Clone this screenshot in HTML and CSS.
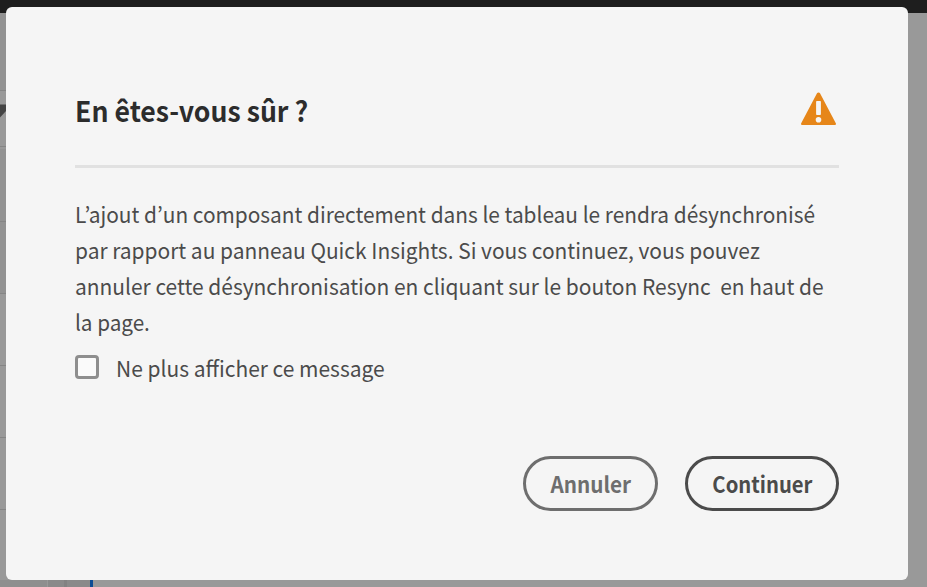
FILE: index.html
```html
<!DOCTYPE html>
<html lang="fr">
<head>
<meta charset="utf-8">
<title>En êtes-vous sûr ?</title>
<link rel="stylesheet" href="styles.css">
</head>
<body>
<div class="backdrop">
  <svg class="page-behind" width="927" height="587" aria-hidden="true">
    <rect width="927" height="587" fill="#999"/>
    <rect width="927" height="13" fill="#1e1e1e"/>
    <rect y="13" width="6" height="77" fill="#929292"/>
    <rect y="149" width="6" height="144" fill="#929292"/>
    <path d="M0 90.5H6M0 146.5H6M0 221.5H6M0 293.5H6M0 365.5H6M0 437.5H6M0 509.5H6" stroke="#858585"/>
    <path d="M0 104.5H6V111L0 117.5Z" fill="#444"/>
    <rect y="580" width="90" height="7" fill="#8f8f8f"/>
    <rect x="48" y="580" width="42" height="7" fill="#8a8a8a"/>
    <rect x="64" y="580" width="3" height="7" fill="#828282"/>
    <rect x="47" y="580" width="1" height="7" fill="#999"/>
    <rect x="90" y="580" width="3" height="7" fill="#0d4c94"/>
  </svg>
  <section class="dialog" role="alertdialog" aria-labelledby="title">
    <header class="header">
      <h1 class="title" id="title">En êtes-vous sûr ?</h1>
      <svg class="alert" width="36" height="34" viewBox="0 0 36 34" aria-hidden="true">
        <path fill="#e68619" d="M17 1.3a1.7 1.7 0 0 1 3 0L35.8 31.3A1.2 1.2 0 0 1 34.8 33H2.2A1.2 1.2 0 0 1 1.2 31.3Z"/>
        <rect x="16.1" y="9" width="4.8" height="14" rx=".8" fill="#f5f5f5"/>
        <circle cx="18.5" cy="27.8" r="2.8" fill="#f5f5f5"/>
      </svg>
    </header>
    <p class="message"><span class="line line-1">L’ajout d’un composant directement dans le tableau le rendra désynchronisé</span>
      <span class="line line-2">par rapport au panneau Quick Insights. Si vous continuez, vous pouvez</span>
      <span class="line line-3">annuler cette désynchronisation en cliquant sur le bouton Resync&nbsp; en haut de</span>
      <span class="line line-4">la page.</span></p>
    <label class="option"><input class="checkbox" type="checkbox"><span class="option-text">Ne plus afficher ce message</span></label>
    <footer class="actions">
      <button class="button button-quiet"><span class="button-label label-quiet">Annuler</span></button>
      <button class="button button-main"><span class="button-label label-main">Continuer</span></button>
    </footer>
  </section>
</div>
</body>
</html>
```
FILE: styles.css
```css
* { box-sizing: border-box; }
body { margin: 0; font-family: "Noto Sans CJK JP", "Noto Sans", sans-serif; color: #4b4b4b; }
.backdrop { position: relative; width: 927px; height: 587px; padding: 7px 19px 7px 6px; overflow: hidden; }
.page-behind { position: absolute; left: 0; top: 0; }
.dialog { position: relative; width: 902px; height: 573px; padding: 69px; border-radius: 6px; background: #f5f5f5; display: flex; flex-direction: column; }
.header { display: flex; justify-content: space-between; height: 92px; flex: none; width: 764px; border-bottom: 3px solid #e1e1e1; }
.title { margin: 14px 0 0; font-size: 28px; line-height: 40px; height: 40px; font-weight: 700; color: #2c2c2c; white-space: nowrap; transform: scaleX(.951); transform-origin: 0 50%; }
.alert { margin: 16px 3px 0 0; }
.message { margin: 27px 0 0; font-size: 22px; line-height: 36px; }
.line { display: block; width: max-content; white-space: nowrap; transform-origin: 0 50%; }
.line-1 { transform: scaleX(.947); }
.line-2 { transform: scaleX(.951); }
.line-3 { transform: scaleX(.952); }
.line-4 { transform: scaleX(.94); }
.option { display: flex; align-items: center; margin-top: 10px; height: 36px; font-size: 22px; line-height: 36px; }
.checkbox { appearance: none; width: 24px; height: 24px; margin: 0 17px 0 0; border: 3px solid #8e8e8e; border-radius: 4px; background: #fafafa; }
.option-text { white-space: nowrap; transform: scaleX(.953); transform-origin: 0 50%; }
.actions { display: flex; justify-content: flex-end; gap: 27px; margin-top: 71px; width: 764px; }
.button { height: 55px; padding: 0 0 1px; border: 3px solid; border-radius: 28px; background: transparent; font: 700 22px/46px "Noto Sans CJK JP", "Noto Sans", sans-serif; white-space: nowrap; }
.button-quiet { width: 135px; color: #6e6e6e; }
.button-main { width: 154px; color: #4b4b4b; }
.button-label { display: inline-block; }
.label-quiet { transform: scaleX(.94); }
.label-main { transform: scaleX(.92); }
```
